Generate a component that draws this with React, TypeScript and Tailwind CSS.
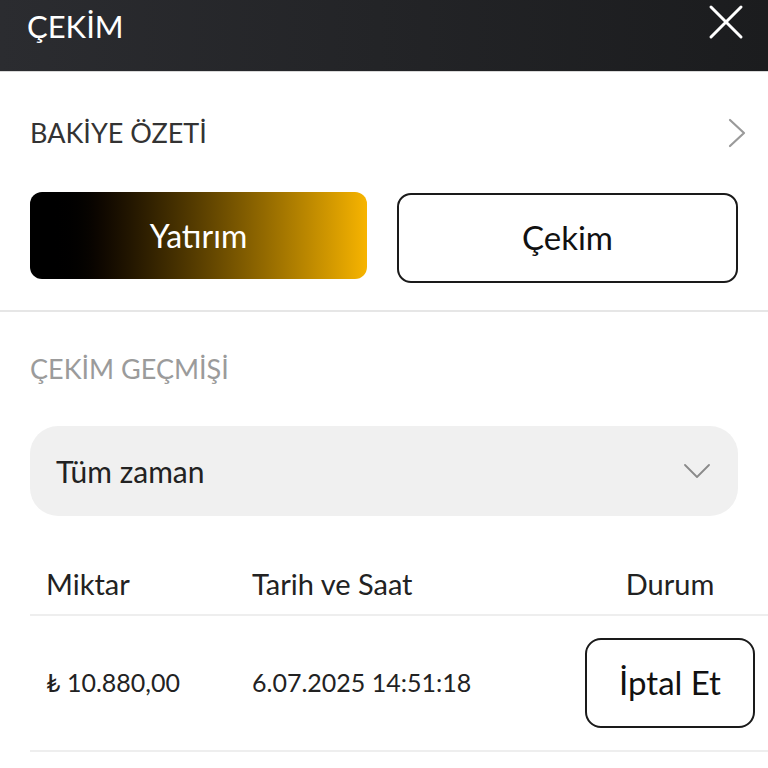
import React from 'react';

const font = { fontFamily: 'Lato, "Noto Sans", "DejaVu Sans", sans-serif' };

const CloseIcon: React.FC = () => (
  <svg width="36" height="36" viewBox="0 0 36 36" fill="none">
    <path d="M3 3L33 33M33 3L3 33" stroke="#ffffff" strokeWidth="3" strokeLinecap="round" />
  </svg>
);

const ChevronRight: React.FC = () => (
  <svg width="18" height="30" viewBox="0 0 18 30" fill="none">
    <path d="M2 2L16 15L2 28" stroke="#9a9a9a" strokeWidth="2.2" strokeLinecap="round" strokeLinejoin="round" />
  </svg>
);

const ChevronDown: React.FC = () => (
  <svg width="26" height="14" viewBox="0 0 26 14" fill="none">
    <path d="M1 1L13 13L25 1" stroke="#8a8a8a" strokeWidth="1.8" strokeLinecap="round" strokeLinejoin="round" />
  </svg>
);

const App: React.FC = () => {
  return (
    <div className="flex min-h-screen w-full flex-col overflow-hidden bg-white" style={font}>
      {/* ust baslik */}
      <div className="flex h-[72px] items-start justify-between border-b border-[#d8d8d8] bg-linear-to-r from-[#2b2c30] to-[#1b1c1e] pl-[27px] pr-[24px]">
        <div className="pt-[6px] text-[31px] leading-[40px] text-white">ÇEKİM</div>
        <div className="pt-[4px]">
          <CloseIcon />
        </div>
      </div>

      <div className="px-[30px]">
        <div className="flex h-[120px] items-center justify-between pt-[2px]">
          <span className="text-[27px] text-[#333333]">BAKİYE ÖZETİ</span>
          <span className="mr-[-8px]">
            <ChevronRight />
          </span>
        </div>
        <div className="flex gap-[30px]">
          <button className="flex h-[87px] flex-1 items-center justify-center rounded-[12px] bg-linear-to-r from-[#000000] from-[5%] to-[#f7b400] text-[32px] text-white">
            Yatırım
          </button>
          <button className="mt-[1px] flex h-[90px] flex-1 items-center justify-center rounded-[14px] border-2 border-[#1a1a1a] bg-white text-[33px] text-[#111111]">
            Çekim
          </button>
        </div>
      </div>

      <div className="mt-[27px] h-[2px] w-full bg-[#e6e6e6]" />

      <div className="px-[30px]">
        <div className="flex h-[114px] items-center">
          <span className="text-[27px] text-[#9b9b9b]">ÇEKİM GEÇMİŞİ</span>
        </div>
        <div className="flex h-[90px] items-center justify-between rounded-[28px] bg-[#f0f0f0] pl-[26px] pr-[28px]">
          <span className="text-[30px] text-[#222222]">Tüm zaman</span>
          <ChevronDown />
        </div>
      </div>

      {/* tablo */}
      <div className="ml-[30px] mt-[38px]">
        <div className="grid h-[60px] grid-cols-[206px_349px_170px] items-center text-[29px] text-[#222222]">
          <span className="pl-[16px]">Miktar</span>
          <span className="pl-[16px]">Tarih ve Saat</span>
          <span className="text-center">Durum</span>
        </div>
        <div className="h-[2px] bg-[#eeeeee]" />
        <div className="grid h-[134px] grid-cols-[206px_349px_170px] items-center text-[25px] text-[#222222]">
          <span className="pl-[16px]">₺ 10.880,00</span>
          <span className="pl-[16px]">6.07.2025 14:51:18</span>
          <button className="flex h-[90px] items-center justify-center rounded-[16px] border-2 border-[#1a1a1a] bg-white text-[33px] text-[#111111]">
            İptal Et
          </button>
        </div>
        <div className="h-[2px] bg-[#eeeeee]" />
      </div>
    </div>
  );
};

export default App;
